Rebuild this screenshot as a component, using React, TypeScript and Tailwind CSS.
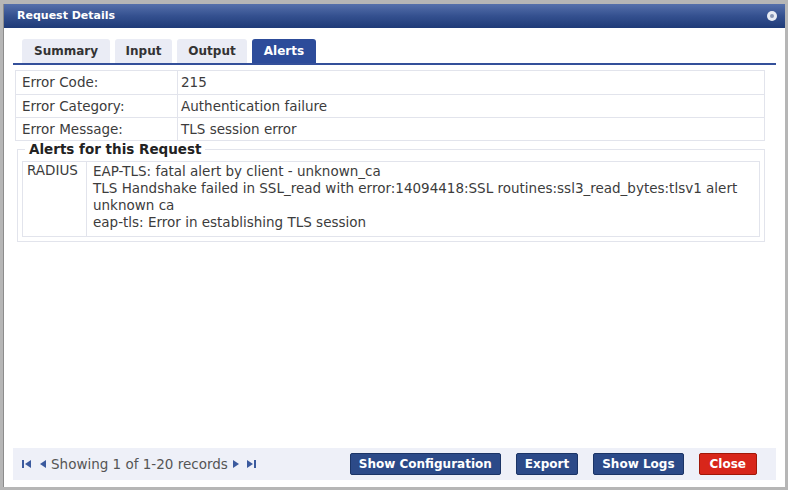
import React from "react";

const font = { fontFamily: '"DejaVu Sans", Verdana, sans-serif' };

function Btn({ label, red }: { label: string; red?: boolean }) {
  return (
    <button
      className={
        red
          ? "h-[22px] px-[10px] rounded-[2px] border border-[#a01808] bg-[#d8261a] text-white text-[12px] font-bold leading-none"
          : "h-[22px] px-[8px] rounded-[2px] border border-[#1b3466] bg-[#2c4a88] text-white text-[12px] font-bold leading-none"
      }
    >
      {label}
    </button>
  );
}

function Tri({ dir }: { dir: "l" | "r" }) {
  return (
    <svg width="6" height="8" viewBox="0 0 6 8">
      {dir === "l" ? <path d="M6 0 L0 4 L6 8 Z" fill="#3b5a9e" /> : <path d="M0 0 L6 4 L0 8 Z" fill="#3b5a9e" />}
    </svg>
  );
}

function Edge({ dir }: { dir: "l" | "r" }) {
  return (
    <svg width="9" height="8" viewBox="0 0 9 8">
      {dir === "l" ? (
        <>
          <rect x="0" y="0" width="2" height="8" fill="#3b5a9e" />
          <path d="M9 0 L3 4 L9 8 Z" fill="#3b5a9e" />
        </>
      ) : (
        <>
          <path d="M0 0 L6 4 L0 8 Z" fill="#3b5a9e" />
          <rect x="7" y="0" width="2" height="8" fill="#3b5a9e" />
        </>
      )}
    </svg>
  );
}

export default function App() {
  const rows = [
    ["Error Code:", "215"],
    ["Error Category:", "Authentication failure"],
    ["Error Message:", "TLS session error"],
  ];
  return (
    <div className="w-[788px] h-[490px] bg-[#b6b6b6] pt-[4px] pl-[3px] pr-[3px] pb-[3px] flex" style={font}>
      <div className="flex-1 flex flex-col bg-white border-l border-[#8c8c8c]">
        <div className="h-[24px] shrink-0 flex items-center justify-between pl-[13px] pr-[8px] bg-gradient-to-b from-[#5670ab] via-[#34508f] to-[#1f3b78]">
          <span className="text-white text-[11px] font-bold">Request Details</span>
          <span className="w-[10px] h-[10px] rounded-full bg-[#e8ecf4] flex items-center justify-center">
            <span className="w-[4px] h-[4px] rounded-full bg-[#8a98b4]" />
          </span>
        </div>
        <div className="flex-1 flex flex-col px-[9px]">
          <div className="mt-[11px] h-[24px] flex items-stretch pl-[9px] gap-[5px]">
            <div className="w-[88px] rounded-t-[3px] bg-[#eaecf5] flex items-center justify-center text-[12px] font-bold text-[#333]">Summary</div>
            <div className="w-[57px] rounded-t-[3px] bg-[#eaecf5] flex items-center justify-center text-[12px] font-bold text-[#333]">Input</div>
            <div className="w-[70px] rounded-t-[3px] bg-[#eaecf5] flex items-center justify-center text-[12px] font-bold text-[#333]">Output</div>
            <div className="w-[64px] rounded-t-[3px] bg-[#2d4c9a] flex items-center justify-center text-[12px] font-bold text-white">Alerts</div>
          </div>
          <div className="h-[2px] bg-[#34509a]" />
          <div className="mt-[5px] ml-[2px] mr-[11px] border border-[#e2e4ec]">
            {rows.map(([k, v], i) => (
              <div key={k} className={"flex h-[23px] items-center text-[13.5px] text-[#3c3c3c] " + (i > 0 ? "border-t border-[#e2e4ec]" : "")}>
                <div className="w-[162px] h-full flex items-center pl-[6px] border-r border-[#e2e4ec]">{k}</div>
                <div className="pl-[3px]">{v}</div>
              </div>
            ))}
          </div>
          <fieldset className="mt-[1px] ml-[4px] mr-[11px] border border-[#e2e4ec] px-[4px] pb-[4px]">
            <legend className="ml-[3px] px-[4px] text-[13.5px] font-bold text-[#222] leading-[14px]">Alerts for this Request</legend>
            <div className="mt-[5px] border border-[#e2e4ec] flex text-[13.5px] text-[#3c3c3c] leading-[17px]">
              <div className="w-[64px] shrink-0 pl-[4px] border-r border-[#e2e4ec]">RADIUS</div>
              <div className="pl-[6px] pt-[1px] pb-[5px]">
                <div>EAP-TLS: fatal alert by client - unknown_ca</div>
                <div>TLS Handshake failed in SSL_read with error:14094418:SSL routines:ssl3_read_bytes:tlsv1 alert unknown ca</div>
                <div>eap-tls: Error in establishing TLS session</div>
              </div>
            </div>
          </fieldset>
          <div className="flex-1" />
          <div className="h-[32px] mb-[7px] bg-[#eef0f8] flex items-center pl-[9px] pr-[19px]">
            <div className="flex items-center text-[13.5px] text-[#555]">
              <Edge dir="l" />
              <span className="ml-[9px]"><Tri dir="l" /></span>
              <span className="ml-[5px]">Showing 1 of 1-20 records</span>
              <span className="ml-[5px]"><Tri dir="r" /></span>
              <span className="ml-[8px]"><Edge dir="r" /></span>
            </div>
            <div className="flex-1" />
            <div className="flex items-center gap-[15px]">
              <Btn label="Show Configuration" />
              <Btn label="Export" />
              <Btn label="Show Logs" />
              <Btn label="Close" red />
            </div>
          </div>
        </div>
      </div>
    </div>
  );
}
